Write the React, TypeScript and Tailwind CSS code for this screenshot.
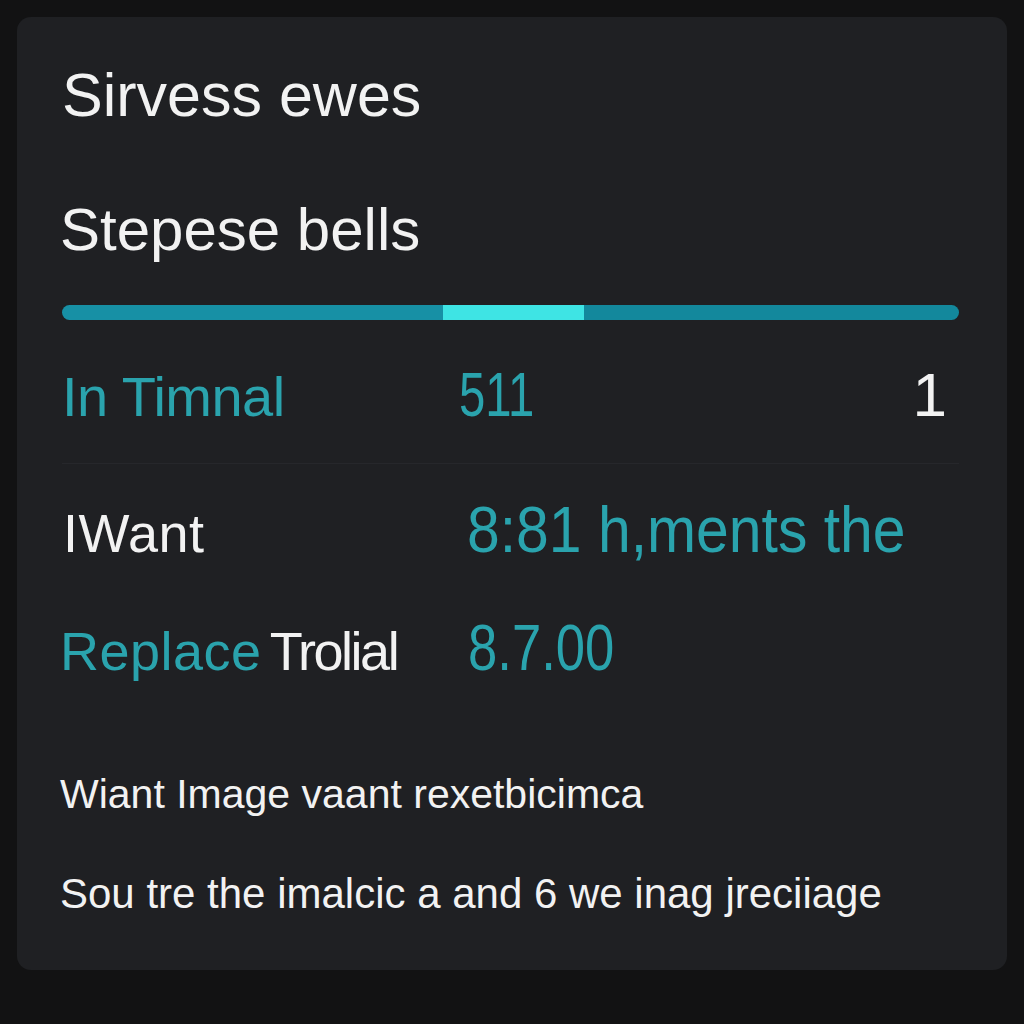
import React from 'react';

const teal = 'text-[#2aa3ad]';
// values in the table are drawn in a squeezed face
const squeeze = 'inline-block origin-left whitespace-nowrap';

export default function App() {
  return (
    <div className="min-h-screen w-full bg-[#121213] p-[17px] pb-[54px] font-['Liberation_Sans',Arial,sans-serif]">
      <div className="rounded-[14px] bg-[#1f2023] pl-[45px] pr-[48px] pt-[48px] pb-[55px] text-[#f2f2f2]">
        <h1 className="text-[61px] leading-none">Sirvess ewes</h1>
        <h2 className="mt-[74px] text-[60px] leading-none -ml-[2px]">Stepese bells</h2>

        {/* progress */}
        <div className="mt-[45px] flex h-[15px] w-full overflow-hidden rounded-full">
          <div className="w-[381px] bg-[#1790a5]" />
          <div className="w-[141px] bg-[#3ee4e4]" />
          <div className="flex-1 bg-[#13889c]" />
        </div>

        {/* stats */}
        <div className="mt-[43px] grid grid-cols-[400px_1fr_auto] items-baseline border-b border-[#26272b] pb-[37px] leading-none">
          <span className={`${teal} text-[56px] tracking-[-0.5px]`}>In Timnal</span>
          <span className={`${teal} ${squeeze} -ml-[3px] scale-x-[0.75] text-[63px]`}>511</span>
          <span className="pr-[12px] text-[62px]">1</span>
        </div>

        <div className="mt-[34px] grid grid-cols-[400px_1fr] items-baseline leading-none">
          <span className="ml-[1px] text-[54px] tracking-[0.5px]">IWant</span>
          <span className={`${teal} ${squeeze} ml-[5px] scale-x-[0.92] text-[64px]`}>8:81 h,ments the</span>
        </div>

        <div className="mt-[53px] grid grid-cols-[400px_1fr] items-baseline leading-none">
          <span className="-ml-[2px] whitespace-nowrap text-[54px]">
            <span className={`${teal} tracking-[0.5px]`}>Replace</span>
            <span className="ml-[8px] tracking-[-2.5px]">Trolial</span>
          </span>
          <span className={`${teal} ${squeeze} ml-[6px] scale-x-[0.81] text-[65px]`}>8.7.00</span>
        </div>

        <p className="mt-[94px] text-[41px] leading-none -ml-[2px]">Wiant Image vaant rexetbicimca</p>
        <p className="mt-[58px] text-[42px] leading-none -ml-[2px]">Sou tre the imalcic a and 6 we inag jreciiage</p>
      </div>
    </div>
  );
}
